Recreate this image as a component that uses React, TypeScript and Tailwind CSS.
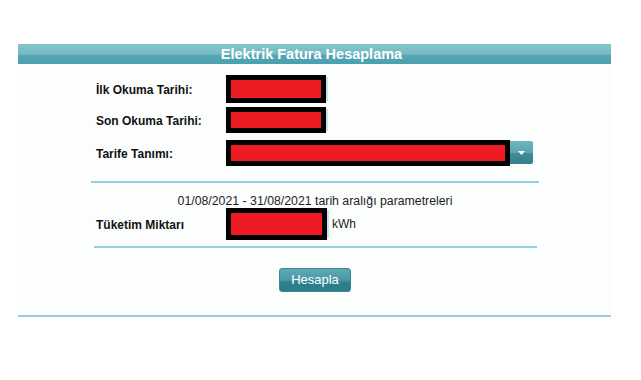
import React from 'react';

const Redacted: React.FC<{ className?: string }> = ({ className = '' }) => (
  <div className={`relative ${className}`}>
    <div className="absolute inset-y-[2px] right-[-2px] w-[2px] bg-[#c6e3ea]"></div>
    <div className="relative w-full h-full border-[5px] border-black bg-[#ed1c24]"></div>
  </div>
);

const Label: React.FC<{ children: React.ReactNode }> = ({ children }) => (
  <div className="w-[135px] pl-[5px] pt-[2px] text-[12px] font-bold text-[#111]">{children}</div>
);

const App: React.FC = () => {
  return (
    <div
      className="w-[641px] h-[380px] bg-white pt-[44px]"
      style={{ fontFamily: '"Liberation Sans", Arial, sans-serif' }}
    >
      <div className="ml-[18px] w-[593px]">
        <div className="h-[20px] flex items-center justify-center pr-[6px] bg-[linear-gradient(to_bottom,#84c4cb_0%,#76bac2_50%,#55a6b4_58%,#4b9fb0_100%)]">
          <span className="text-[14.5px] font-bold text-white leading-none">Elektrik Fatura Hesaplama</span>
        </div>

        <div className="bg-[#fcfefe] pl-[73px] pt-[11px]">
          <div className="w-[448px]">
            <div className="flex items-center h-[28px]">
              <Label>İlk Okuma Tarihi:</Label>
              <Redacted className="w-[100px] h-[28px]" />
            </div>
            <div className="flex items-center h-[26px] mt-[4px]">
              <Label>Son Okuma Tarihi:</Label>
              <Redacted className="w-[100px] h-[26px]" />
            </div>
            <div className="flex items-center h-[26px] mt-[7px]">
              <Label>Tarife Tanımı:</Label>
              <div className="w-[284px] h-[26px] border-[5px] border-black bg-[#ed1c24]"></div>
              <div className="w-[23px] h-[23px] self-start mt-[1px] rounded-r-[2px] flex items-center justify-center bg-[linear-gradient(to_bottom,#6fb4bf_0%,#5aa5b2_50%,#3f8b99_55%,#357f8d_100%)]">
                <svg width="7" height="4" viewBox="0 0 7 4">
                  <path d="M0 0 L7 0 L3.5 4 Z" fill="#fff" />
                </svg>
              </div>
            </div>

            <div className="mt-[15px] h-[2px] bg-[#93d0e1]"></div>

            <div className="mt-[11px] text-center text-[12.3px] leading-[14px] text-[#222]">
              01/08/2021 - 31/08/2021 tarih aralığı parametreleri
            </div>

            <div className="flex items-center h-[32px]">
              <Label>Tüketim Miktarı</Label>
              <Redacted className="w-[101px] h-[32px]" />
              <span className="ml-[5px] text-[12px] text-[#222]">kWh</span>
            </div>

            <div className="mt-[6px] ml-[3px] w-[443px] h-[2px] bg-[#93d0e1]"></div>
          </div>

          <div className="w-[448px] flex justify-center pt-[20px] pb-[23px]">
            <button className="w-[72px] h-[24px] rounded-[3px] border border-[#3b8896] text-white text-[13px] bg-[linear-gradient(to_bottom,#5ea9b4_0%,#4a99a7_50%,#2f7f8c_60%,#2c7b88_100%)]">
              Hesapla
            </button>
          </div>
        </div>

        <div className="h-[2px] bg-[#9ccdd9]"></div>
      </div>
    </div>
  );
};

export default App;
